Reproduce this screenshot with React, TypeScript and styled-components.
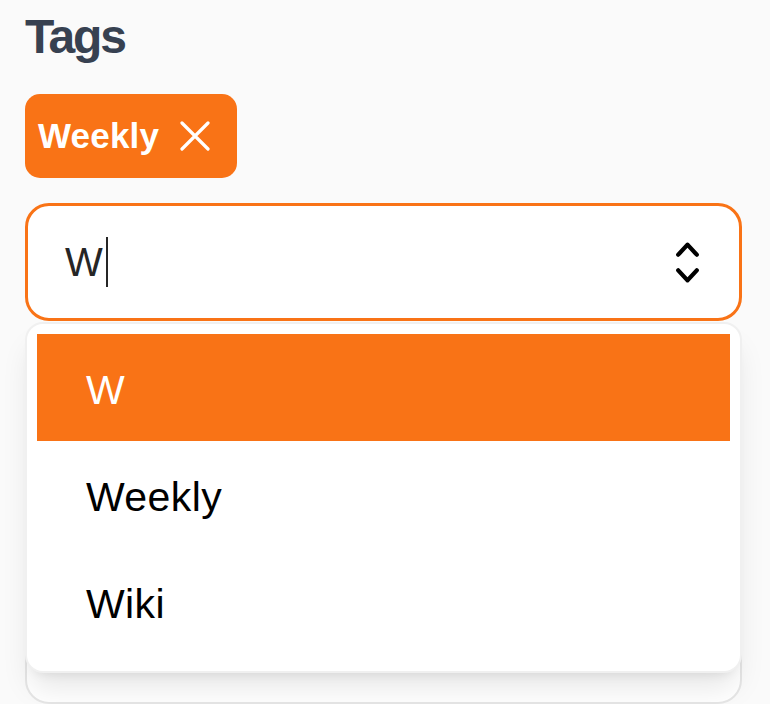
import React from "react";
import styled, { createGlobalStyle } from "styled-components";

const GlobalStyle = createGlobalStyle`
  html, body {
    margin: 0;
    padding: 0;
    background: #fafafa;
    font-family: "Liberation Sans", Arial, sans-serif;
  }
  * { box-sizing: border-box; }
`;

const Page = styled.div`
  width: 770px;
  height: 704px;
  overflow: hidden;
  padding: 8px 28px 0 25px;
  display: flex;
  flex-direction: column;
`;

const Heading = styled.h2`
  margin: 0;
  font-size: 48px;
  line-height: 57px;
  font-weight: 700;
  letter-spacing: -2.2px;
  color: #374151;
`;

const ChipRow = styled.div`
  display: flex;
  flex-wrap: wrap;
  gap: 12px;
  margin-top: 29px;
`;

const Chip = styled.span`
  display: inline-flex;
  align-items: center;
  gap: 21px;
  height: 84px;
  padding: 0 27px 0 13px;
  border-radius: 15px;
  background: #f97316;
  color: #ffffff;
  font-size: 35px;
  font-weight: 700;
  letter-spacing: 0.2px;
`;

const RemoveButton = styled.button`
  display: inline-flex;
  align-items: center;
  justify-content: center;
  width: 30px;
  height: 30px;
  padding: 0;
  border: none;
  background: transparent;
  color: #ffffff;
  cursor: pointer;
`;

const Field = styled.div`
  position: relative;
  margin-top: 25px;
`;

const InputBox = styled.div`
  display: flex;
  align-items: center;
  height: 118px;
  padding: 0 23px 0 37px;
  border: 3px solid #f97316;
  border-radius: 24px;
  background: #ffffff;
`;

const Value = styled.span`
  font-size: 40px;
  line-height: 50px;
  color: #262626;
`;

const Caret = styled.span`
  display: inline-block;
  width: 2px;
  height: 50px;
  margin-left: 3px;
  background: #262626;
`;

const ToggleIcon = styled.svg`
  margin-left: auto;
  width: 57px;
  height: 57px;
  color: #000000;
`;

const Listbox = styled.ul`
  position: absolute;
  top: calc(100% + 1px);
  left: 0;
  right: 0;
  margin: 0;
  padding: 10px 10px 16px;
  list-style: none;
  background: #ffffff;
  border: 2px solid rgba(0, 0, 0, 0.06);
  border-radius: 18px;
  box-shadow: 0 20px 30px -6px rgba(0, 0, 0, 0.1),
    0 8px 12px -8px rgba(0, 0, 0, 0.1);
  z-index: 10;
`;

const Option = styled.li<{ $active?: boolean }>`
  display: flex;
  align-items: center;
  height: 107px;
  padding: 5px 0 0 49px;
  font-size: 41px;
  letter-spacing: 0.4px;
  color: ${(p) => (p.$active ? "#ffffff" : "#000000")};
  background: ${(p) => (p.$active ? "#f97316" : "transparent")};
`;

const NextField = styled.div`
  margin-top: 24px;
  height: 420px;
  border: 2px solid #e6e6e6;
  border-radius: 24px;
  background: #ffffff;
`;

const options = ["W", "Weekly", "Wiki"];

export default function App() {
  return (
    <>
      <GlobalStyle />
      <Page>
        <Heading>Tags</Heading>
        <ChipRow>
          <Chip>
            Weekly
            <RemoveButton aria-label="Remove Weekly">
              <svg width="30" height="30" viewBox="0 0 30 30" fill="none">
                <path
                  d="M2 2 L28 28 M28 2 L2 28"
                  stroke="currentColor"
                  strokeWidth="3.2"
                  strokeLinecap="round"
                />
              </svg>
            </RemoveButton>
          </Chip>
        </ChipRow>
        <Field>
          <InputBox>
            <Value>W</Value>
            <Caret />
            <ToggleIcon viewBox="0 0 20 20" fill="currentColor">
              <path
                fillRule="evenodd"
                d="M10 3a.75.75 0 01.55.24l3.25 3.5a.75.75 0 11-1.1 1.02L10 4.852 7.3 7.76a.75.75 0 01-1.1-1.02l3.25-3.5A.75.75 0 0110 3zm-3.76 9.2a.75.75 0 011.06.04l2.7 2.908 2.7-2.908a.75.75 0 111.1 1.02l-3.25 3.5a.75.75 0 01-1.1 0l-3.25-3.5a.75.75 0 01.04-1.06z"
                clipRule="evenodd"
              />
            </ToggleIcon>
          </InputBox>
          <Listbox>
            {options.map((o, i) => (
              <Option key={o} $active={i === 0}>
                {o}
              </Option>
            ))}
          </Listbox>
        </Field>
        <NextField />
      </Page>
    </>
  );
}
